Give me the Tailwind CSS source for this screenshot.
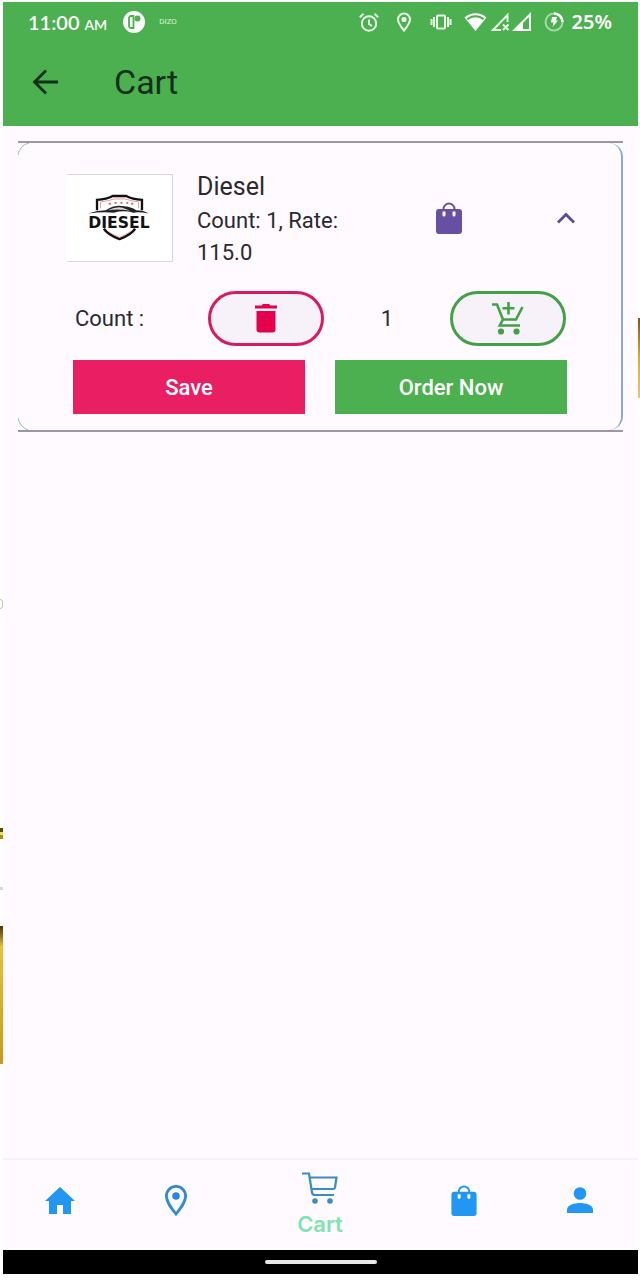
<!DOCTYPE html>
<html lang="en">
<head>
<meta charset="utf-8">
<meta name="viewport" content="width=device-width, initial-scale=1">
<title>Cart</title>
<script src="https://cdn.jsdelivr.net/npm/@tailwindcss/browser@4"></script>
</head>
<body class="relative flex min-h-screen flex-col bg-white pt-[2px] pr-[2px] pb-[6px] pl-[3px] font-['Roboto',sans-serif] text-[#2b292e]">
  <!-- Slivers of the backdrop at the page edges -->
  <div class="absolute top-[318px] right-0 h-[80px] w-[2px] bg-linear-to-b from-[#7a5a10] via-[#d9b020] to-[#e8c860]" aria-hidden="true"></div>
  <div class="absolute top-[599px] left-0 h-[10px] w-[3px] rounded-r-full border border-l-0 border-[#cfc8a8]" aria-hidden="true"></div>
  <div class="absolute top-[828px] left-0 h-[11px] w-[3px] border-y-4 border-t-[#5a4a08] border-b-[#b08a10] bg-[#f5d860]" aria-hidden="true"></div>
  <div class="absolute top-[887px] left-0 h-[3px] w-[3px] bg-[#dcd6cc]" aria-hidden="true"></div>
  <div class="absolute top-[926px] left-0 h-[138px] w-[3px] bg-linear-to-b from-[#4a3508] via-[#e8c040] via-15% to-[#c79a18]" aria-hidden="true"></div>

  <header class="bg-[#4caf50] pb-4">
    <div class="flex h-10 items-center justify-between pr-[26px] pl-[25px] text-white">
      <div class="flex items-center">
        <span class="font-['Lato',sans-serif] text-xl font-semibold whitespace-nowrap">11:00 <span class="text-sm">AM</span></span>
        <svg class="ml-4 size-[22px]" viewBox="0 0 22 22" aria-hidden="true"><circle cx="11" cy="11" r="11" fill="#fff"/><path d="M8 5h2.500v12H8a2 2 0 0 1-2-2V7a2 2 0 0 1 2-2z" fill="none" stroke="#4caf50" stroke-width="1.800"/><circle cx="14.500" cy="7.500" r="3" fill="#4caf50"/></svg>
        <span class="ml-3.5 text-[8px] text-white/80">DIZO</span>
      </div>
      <div class="flex items-center">
        <svg class="size-5" viewBox="0 0 20 20" fill="none" stroke="#eaffea" stroke-width="2" aria-label="Alarm"><circle cx="10" cy="11.500" r="7.200"/><path d="M10 7.500v4.500l3 2M.8 5.200l3.700-3.500M19.200 5.200l-3.700-3.500"/></svg>
        <svg class="ml-[17px] h-5 w-4" viewBox="0 0 16 20" fill="none" stroke="#eaffea" stroke-width="2" aria-label="Location"><path d="M8 18.500C4.500 14.200 2 10.700 2 7.500a6 6 0 0 1 12 0c0 3.200-2.500 6.700-6 11z"/><circle cx="8" cy="7.500" r="1.600" fill="#eaffea"/></svg>
        <svg class="ml-[17px] h-5 w-6" viewBox="0 0 24 20" fill="none" stroke="#eaffea" aria-label="Vibrate"><rect x="8" y="3.500" width="8" height="13" rx="1" stroke-width="2"/><path d="M5 5v10M2.500 7v6M19 5v10M21.500 7v6" stroke-width="2"/></svg>
        <svg class="ml-[11px] h-5 w-[23px]" viewBox="0 0 23 20" aria-label="Wi-Fi"><path d="M11.500 19 .5 5.500C3 3 7 1.200 11.500 1.200S20 3 22.500 5.500z" fill="#fff"/><path d="M3.300 7.300C5.500 5.300 8.500 4.200 11.500 4.200s6 1.100 8.200 3.100" fill="none" stroke="#4caf50" stroke-width="2"/></svg>
        <svg class="ml-[3px] size-5" viewBox="0 0 20 20" fill="none" stroke="#eaffea" stroke-width="2" aria-label="No signal"><path d="M17.500 10V3L3 18h8M13 12.500l5.500 5.500M18.500 12.500 13 18"/></svg>
        <svg class="ml-[2px] size-5" viewBox="0 0 20 20" aria-label="Signal"><path d="M2.500 18 18 2.500V18z" fill="none" stroke="#fff" stroke-width="2"/><path d="M2 18 11 9v9z" fill="#fff"/></svg>
        <svg class="ml-3 size-5" viewBox="0 0 20 20" fill="none" aria-label="Charging"><circle cx="10" cy="10" r="8.500" stroke="#a5d8a7" stroke-width="2"/><path d="M10 1.500a8.500 8.500 0 0 1 8.500 8.500" stroke="#fff" stroke-width="2.500"/><path d="M8 5h5l-1.300 3.500H14L8.500 15l1-4.500H7z" fill="#fff"/></svg>
        <span class="ml-2 font-['Noto_Sans',sans-serif] text-xl font-semibold">25%</span>
      </div>
    </div>
    <div class="flex h-[68px] items-center pt-3 pl-[26px]">
      <button type="button" aria-label="Back" class="flex size-[34px] items-center justify-center">
        <svg class="size-[34px]" viewBox="0 0 34 34" fill="none" stroke="#10301a" stroke-width="2.800" aria-hidden="true"><path d="M29 17H6M17 5.500 5.500 17 17 28.500"/></svg>
      </button>
      <h1 class="ml-[51px] text-[34px] leading-10 text-[#12301a]">Cart</h1>
    </div>
  </header>

  <main class="flex-1 bg-[#fefaff] pt-[15px] pr-[15px] pl-[15px]">
    <section class="relative border-y-2 border-[#9a98a4]">
      <svg class="absolute top-0 left-0 h-3 w-3" viewBox="0 0 12 12" fill="none" stroke="#a9bccb" aria-hidden="true"><path d="M0 12Q2 2 11 0"/></svg>
      <svg class="absolute bottom-0 left-0 h-3 w-3" viewBox="0 0 12 12" fill="none" stroke="#8fb8cf" aria-hidden="true"><path d="M0 0Q2 9 10 12"/></svg>
      <div class="rounded-r-[14px] border-r-2 border-[#86afc9] pt-6 pr-[54px] pb-4 pl-[55px]">
        <div class="-ml-1.5 flex items-center">
          <svg class="h-[88px] w-[106px] shrink-0 border-y border-r border-[#d5d9dc] bg-white" viewBox="0 0 106 88" role="img" aria-label="Diesel logo">
            <g fill="none" stroke="#111" stroke-width="2.400">
              <path d="M30 36V25.500q10-.5 16-4h14q6 3.500 16 4V36"/>
              <path d="M37 55q4 6 16 10.500Q65 61 69 55" stroke-width="2.500"/>
            </g>
            <path d="M33.500 34v-6.500q9-1 14-3h11q6 2 14 3V34M42 58q4 3 11 6 7-3 11-6" fill="none" stroke="#e79a9a"/>
            <path d="M42 29.500h2m4-1h2m4 0h2m4 0h2m3 1h2" stroke="#c66" stroke-width="2"/>
            <path d="M21 39.500q9-3.500 18-3.500 9-6 19-4 8 1 12 4 8 0 13 3.500-10-2-16-1-9-3-20 0-13-1-26 1z" fill="#222"/>
            <path d="M41 36q9-4 15-2.500l8 3q-12-2-23-.5z" fill="#ddd"/>
            <text x="52.500" y="54" text-anchor="middle" font-family="DejaVu Sans" font-weight="700" font-size="16" fill="#111">DIESEL</text>
          </svg>
          <div class="ml-6 w-[180px] pt-[2px]">
            <h2 class="text-[25px] leading-9">Diesel</h2>
            <p class="text-[22px] leading-8">Count: 1, Rate: 115.0</p>
          </div>
          <svg class="ml-auto h-8 w-[26px]" viewBox="0 0 26 32" aria-hidden="true"><path fill="#6750a4" fill-rule="evenodd" d="M3 7h3.500a6.500 6.500 0 0 1 13 0H23q3 0 3 3v19q0 3-3 3H3q-3 0-3-3V10q0-3 3-3zm5.500 0h9a4.500 4.500 0 0 0-9 0zM6.500 9.500v3.500a1.500 1.500 0 0 0 3 0V9.500zm10 0v3.500a1.500 1.500 0 0 0 3 0V9.500z"/></svg>
          <button type="button" aria-label="Collapse" class="ml-[95px] -mr-2 flex h-8 w-[18px] items-center">
            <svg class="h-3 w-[18px]" viewBox="0 0 18 12" fill="none" stroke="#5f4a95" stroke-width="2.800" aria-hidden="true"><path d="M1 10.500 9 2.500l8 8"/></svg>
          </button>
        </div>
        <div class="mt-[22px] flex items-center justify-between pr-px pl-[2px] text-[22px]">
          <span class="w-[76px]">Count :</span>
          <button type="button" aria-label="Remove one" class="flex h-[55px] w-[116px] items-center justify-center rounded-full border-3 border-[#d81b60] bg-[#f7f2fa]">
            <svg class="h-[29px] w-6" viewBox="0 0 24 29" fill="#e5004f" aria-hidden="true"><path d="M1 1.500h6.500L9 0h6l1.500 1.500H23v3H1zM2.500 7h19v18.500q0 3-3 3h-13q-3 0-3-3z"/></svg>
          </button>
          <output>1</output>
          <button type="button" aria-label="Add one" class="flex h-[55px] w-[116px] items-center justify-center rounded-full border-3 border-[#43a047] bg-[#f7f2fa]">
            <svg class="h-[33px] w-8" viewBox="0 0 32 33" fill="none" stroke="#43a047" stroke-width="2.600" aria-hidden="true"><path d="M0 2.500h5L11 17.500h13L30.500 5M16.500 0v12.500M10.500 6.300h12M11 17.500 7.800 23.500h20.200"/><g fill="#43a047" stroke="none"><circle cx="9" cy="29.500" r="3.100"/><circle cx="24.500" cy="29.500" r="3.100"/></g></svg>
          </button>
        </div>
        <div class="mt-[14px] grid grid-cols-2 gap-[30px] text-[22px] font-medium text-white">
          <button type="button" class="h-[54px] bg-[#e91e63]">Save</button>
          <button type="button" class="h-[54px] bg-[#4caf50]">Order Now</button>
        </div>
      </div>
    </section>
  </main>

  <nav aria-label="Main" class="flex h-[92px] items-center justify-between border-t-2 border-[#f7f1f7] bg-[#fefaff] pr-[42px] pb-[10px] pl-[41px] text-[#2196f3]">
    <a href="#home" aria-label="Home" class="flex w-8 justify-center"><svg class="h-[27px] w-[30px]" viewBox="0 0 30 27" fill="currentColor" aria-hidden="true"><path d="M15 0 30 14h-4v13h-8v-9h-6v9H4V14H0z"/></svg></a>
    <a href="#places" aria-label="Places" class="flex w-8 justify-center"><svg class="h-[31px] w-[22px]" viewBox="0 0 22 31" aria-hidden="true"><path d="M11 29C5 21.500 1.400 16.500 1.400 11a9.600 9.600 0 0 1 19.200 0c0 5.500-3.600 10.500-9.600 18z" fill="none" stroke="#3489cf" stroke-width="2.800"/><circle cx="11" cy="11" r="3.800" fill="#2789dc"/></svg></a>
    <a href="#cart" aria-current="page" class="flex w-[88px] flex-col items-center pt-3">
      <svg class="h-8 w-9" viewBox="0 0 36 32" fill="none" stroke="#3a8cc8" stroke-width="2.200" aria-hidden="true"><path d="M0 1.500h7l3 19q.4 2.500 3 2.500H32M8 5.500h26.500L33 15.500q-.3 1.500-2 1.500H10"/><g fill="#3a8cc8" stroke="none"><circle cx="13" cy="29" r="2.800"/><circle cx="28" cy="29" r="2.800"/></g></svg>
      <span class="mt-1 font-['Inter',sans-serif] text-[22px] leading-8 font-semibold text-[#7fe3b2]">Cart</span>
    </a>
    <a href="#orders" aria-label="Orders" class="flex w-8 justify-center"><svg class="h-[31px] w-[26px]" viewBox="0 0 26 32" aria-hidden="true"><path fill="currentColor" fill-rule="evenodd" d="M3 7h3.500a6.500 6.500 0 0 1 13 0H23q3 0 3 3v19q0 3-3 3H3q-3 0-3-3V10q0-3 3-3zm5.500 0h9a4.500 4.500 0 0 0-9 0zM6.500 9.500v3.500a1.500 1.500 0 0 0 3 0V9.500zm10 0v3.500a1.500 1.500 0 0 0 3 0V9.500z"/></svg></a>
    <a href="#profile" aria-label="Profile" class="flex w-8 justify-center"><svg class="h-[26px] w-[26px]" viewBox="0 0 26 26" fill="currentColor" aria-hidden="true"><circle cx="13" cy="6.500" r="6.300"/><path d="M0 26v-3.500C0 18 8 16 13 16s13 2 13 6.500V26z"/></svg></a>
  </nav>
  <footer class="flex h-6 items-center justify-center bg-black">
    <div class="h-1 w-28 rounded-full bg-[#e8e8e8]"></div>
  </footer>
</body>
</html>
